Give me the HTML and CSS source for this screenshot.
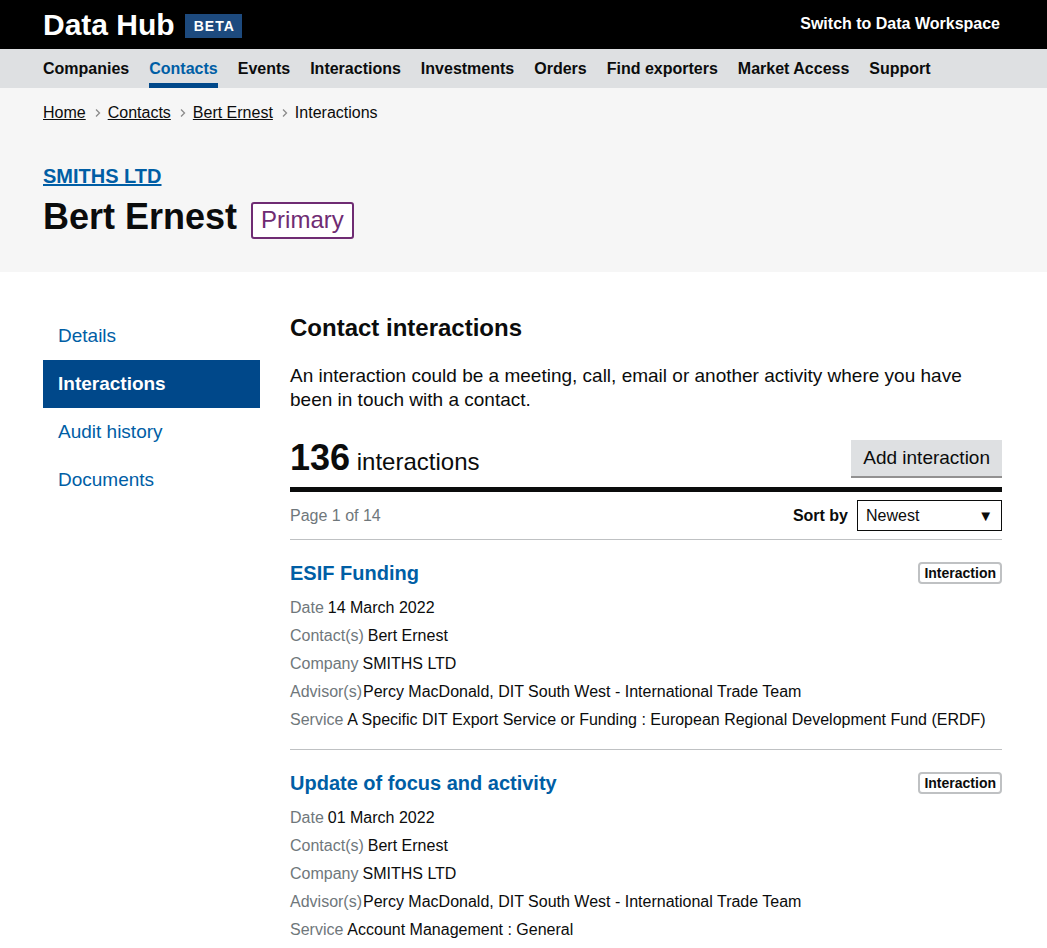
FILE: index.html
```html
<!DOCTYPE html>
<html lang="en">
<head>
<meta charset="utf-8">
<title>Bert Ernest - Interactions - Data Hub</title>
<link rel="stylesheet" href="styles.css">
</head>
<body>
<header class="masthead">
  <div class="wrap masthead-inner">
    <div class="brand">
      <span class="brand-name">Data Hub</span>
      <span class="brand-beta">BETA</span>
    </div>
    <a class="switch-link" href="#">Switch to Data Workspace</a>
  </div>
</header>
<nav class="mainnav">
  <div class="wrap mainnav-inner">
    <a href="#" class="mainnav-item">Companies</a>
    <a href="#" class="mainnav-item is-active">Contacts</a>
    <a href="#" class="mainnav-item">Events</a>
    <a href="#" class="mainnav-item">Interactions</a>
    <a href="#" class="mainnav-item">Investments</a>
    <a href="#" class="mainnav-item">Orders</a>
    <a href="#" class="mainnav-item">Find exporters</a>
    <a href="#" class="mainnav-item">Market Access</a>
    <a href="#" class="mainnav-item">Support</a>
  </div>
</nav>
<section class="localheader">
  <div class="wrap">
    <ol class="crumbs">
      <li><a href="#">Home</a></li>
      <li class="crumb-sep"><svg width="8" height="10" viewBox="0 0 8 10"><path d="M2 1.5 L5.5 5 L2 8.5" fill="none" stroke="#8b8b8b" stroke-width="1.3"/></svg></li>
      <li><a href="#">Contacts</a></li>
      <li class="crumb-sep"><svg width="8" height="10" viewBox="0 0 8 10"><path d="M2 1.5 L5.5 5 L2 8.5" fill="none" stroke="#8b8b8b" stroke-width="1.3"/></svg></li>
      <li><a href="#">Bert Ernest</a></li>
      <li class="crumb-sep"><svg width="8" height="10" viewBox="0 0 8 10"><path d="M2 1.5 L5.5 5 L2 8.5" fill="none" stroke="#8b8b8b" stroke-width="1.3"/></svg></li>
      <li class="crumb-current">Interactions</li>
    </ol>
    <a href="#" class="company-link">SMITHS LTD</a>
    <div class="name-row">
      <h1 class="contact-name">Bert Ernest</h1>
      <span class="primary-tag">Primary</span>
    </div>
  </div>
</section>
<main class="wrap layout">
  <aside class="sidenav">
    <a href="#" class="sidenav-item">Details</a>
    <a href="#" class="sidenav-item is-active">Interactions</a>
    <a href="#" class="sidenav-item">Audit history</a>
    <a href="#" class="sidenav-item">Documents</a>
  </aside>
  <div class="content">
    <h2 class="content-title">Contact interactions</h2>
    <p class="content-intro">An interaction could be a meeting, call, email or another activity where you have been in touch with a contact.</p>
    <div class="results-head">
      <div class="results-count"><span class="count-num">136</span> interactions</div>
      <a href="#" class="btn-secondary">Add interaction</a>
    </div>
    <div class="results-bar">
      <span class="page-info">Page 1 of 14</span>
      <div class="sort">
        <span class="sort-label">Sort by</span>
        <div class="sort-select"><span>Newest</span><span class="sort-arrow">▼</span></div>
      </div>
    </div>
    <ul class="results">
      <li class="result">
        <div class="result-top">
          <a href="#" class="result-title">ESIF Funding</a>
          <span class="result-tag">Interaction</span>
        </div>
        <dl class="meta">
          <div class="meta-row"><dt>Date</dt><dd>14 March 2022</dd></div>
          <div class="meta-row"><dt>Contact(s)</dt><dd>Bert Ernest</dd></div>
          <div class="meta-row"><dt>Company</dt><dd>SMITHS LTD</dd></div>
          <div class="meta-row"><dt class="tight">Advisor(s)</dt><dd>Percy MacDonald, DIT South West - International Trade Team</dd></div>
          <div class="meta-row"><dt>Service</dt><dd>A Specific DIT Export Service or Funding : European Regional Development Fund (ERDF)</dd></div>
        </dl>
      </li>
      <li class="result">
        <div class="result-top">
          <a href="#" class="result-title">Update of focus and activity</a>
          <span class="result-tag">Interaction</span>
        </div>
        <dl class="meta">
          <div class="meta-row"><dt>Date</dt><dd>01 March 2022</dd></div>
          <div class="meta-row"><dt>Contact(s)</dt><dd>Bert Ernest</dd></div>
          <div class="meta-row"><dt>Company</dt><dd>SMITHS LTD</dd></div>
          <div class="meta-row"><dt class="tight">Advisor(s)</dt><dd>Percy MacDonald, DIT South West - International Trade Team</dd></div>
          <div class="meta-row"><dt>Service</dt><dd>Account Management : General</dd></div>
        </dl>
      </li>
    </ul>
  </div>
</main>
</body>
</html>
```

FILE: styles.css
```css
* { box-sizing: border-box; }
html, body { margin: 0; padding: 0; }
body {
  font-family: "Liberation Sans", Arial, Helvetica, sans-serif;
  color: #0b0c0c;
  background: #fff;
}
a { color: #005ea5; }

.wrap {
  width: 959px;
  margin: 0 45px 0 43px;
}

/* Masthead */
.masthead {
  background: #000;
  height: 49px;
}
.masthead-inner {
  display: flex;
  align-items: center;
  justify-content: space-between;
  height: 49px;
}
.brand {
  display: flex;
  align-items: center;
  gap: 10px;
}
.brand-name {
  color: #fff;
  font-weight: 700;
  font-size: 30px;
  line-height: 30px;
}
.brand-beta {
  background: #1d4a7e;
  color: #fff;
  font-weight: 700;
  font-size: 14px;
  letter-spacing: 1px;
  line-height: 24px;
  padding: 0 7px 0 9px;
  margin-top: 3px;
}
.switch-link {
  color: #fff;
  font-weight: 700;
  font-size: 16px;
  text-decoration: none;
  margin-right: 2px;
  margin-top: -2px;
}

/* Main nav */
.mainnav {
  background: #dee0e2;
  height: 39px;
}
.mainnav-inner {
  display: flex;
  gap: 20px;
  height: 39px;
}
.mainnav-item {
  color: #0b0c0c;
  font-weight: 700;
  font-size: 16px;
  text-decoration: none;
  line-height: 39px;
  height: 39px;
  border-bottom: 5px solid transparent;
}
.mainnav-item.is-active {
  color: #005ea5;
  border-bottom-color: #00488a;
}

/* Local header */
.localheader {
  background: #f6f6f6;
  height: 184px;
  padding-top: 13px;
}
.crumbs {
  list-style: none;
  margin: 0;
  padding: 0;
  display: flex;
  align-items: center;
  font-size: 16px;
  line-height: 24px;
}
.crumbs li { display: flex; align-items: center; }
.crumbs a { color: #0b0c0c; }
.crumb-sep { margin: 0 6px 0 8px; }
.crumb-current { color: #0b0c0c; }

.company-link {
  display: inline-block;
  margin-top: 39px;
  font-weight: 700;
  font-size: 20px;
  line-height: 24px;
  color: #005ea5;
}
.name-row {
  display: flex;
  align-items: center;
  gap: 14px;
  margin-top: 6px;
}
.contact-name {
  margin: 0;
  font-size: 36px;
  line-height: 40px;
  font-weight: 700;
}
.primary-tag {
  border: 2px solid #6f2c73;
  border-radius: 3px;
  color: #6f2c73;
  font-size: 24px;
  line-height: 30px;
  padding: 1px 8px 2px 8px;
  background: #fff;
  margin-top: 8px;
}

/* Layout */
.layout {
  display: grid;
  grid-template-columns: 217px 1fr;
  column-gap: 30px;
  padding-top: 40px;
}

.sidenav {
  display: flex;
  flex-direction: column;
}
.sidenav-item {
  display: block;
  height: 48px;
  line-height: 48px;
  padding-left: 15px;
  font-size: 19px;
  color: #005ea5;
  text-decoration: none;
}
.sidenav-item.is-active {
  background: #00488a;
  color: #fff;
  font-weight: 700;
}

.content-title {
  margin: 0;
  font-size: 24px;
  line-height: 32px;
  font-weight: 700;
}
.content-intro {
  margin: 20px 0 0;
  font-size: 19px;
  line-height: 24px;
}
.results-head {
  display: flex;
  align-items: center;
  justify-content: space-between;
  margin-top: 28px;
  height: 36px;
}
.results-count {
  font-size: 24px;
  line-height: 36px;
  padding-top: 3px;
}
.count-num {
  font-weight: 700;
  font-size: 36px;
}
.btn-secondary {
  background: #dee0e2;
  color: #0b0c0c;
  text-decoration: none;
  font-size: 19px;
  line-height: 36px;
  height: 36px;
  padding: 0 12px;
  box-shadow: 0 2px 0 #929191;
}
.results-bar {
  margin-top: 11px;
  border-top: 5px solid #0b0c0c;
  border-bottom: 1px solid #bfc1c3;
  display: flex;
  align-items: center;
  justify-content: space-between;
  padding: 8px 0 8px;
}
.page-info {
  color: #6f777b;
  font-size: 16px;
}
.sort {
  display: flex;
  align-items: center;
  gap: 9px;
}
.sort-label {
  font-weight: 700;
  font-size: 16px;
}
.sort-select {
  width: 145px;
  height: 31px;
  border: 1px solid #0b0c0c;
  display: flex;
  align-items: center;
  justify-content: space-between;
  padding: 0 8px 0 8px;
  font-size: 16px;
  background: #fff;
}
.sort-arrow { font-size: 15px; }

.results {
  list-style: none;
  margin: 0;
  padding: 0;
}
.result {
  border-bottom: 1px solid #bfc1c3;
  padding: 20px 0 15px;
}
.result-top {
  display: flex;
  justify-content: space-between;
  align-items: flex-start;
}
.result-title {
  font-weight: 700;
  font-size: 20px;
  line-height: 26px;
  color: #005ea5;
  text-decoration: none;
}
.result-tag {
  border: 2px solid #bfc1c3;
  border-radius: 4px;
  font-weight: 700;
  font-size: 14px;
  line-height: 18px;
  padding: 0 4px;
  margin-top: 2px;
}
.meta {
  margin: 8px 0 0;
}
.meta-row {
  display: flex;
  font-size: 16px;
  line-height: 28px;
}
.meta dt {
  color: #6f777b;
  margin-right: 4px;
}
.meta dt.tight { margin-right: 1px; }
.meta dd { margin: 0; }
```
